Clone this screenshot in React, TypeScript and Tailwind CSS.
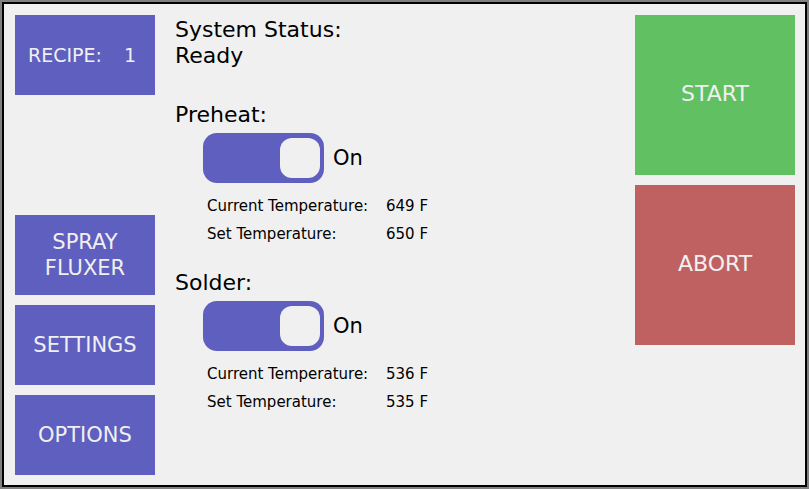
import React from "react";

const font = { fontFamily: '"DejaVu Sans", Verdana, sans-serif' };

const NavButton = ({ children, className = "" }: { children: React.ReactNode; className?: string }) => (
  <button
    className={`w-[140px] h-[80px] bg-[#5f5fbf] text-[#f0f0f0] text-[21px] leading-[26px] flex flex-col items-center justify-center ${className}`}
  >
    {children}
  </button>
);

const Toggle = ({ on }: { on: boolean }) => (
  <div className="flex items-center gap-[9px] ml-[28px]">
    <div className="w-[121px] h-[50px] rounded-[14px] bg-[#5f5fbf] flex items-center justify-end pr-[4px]">
      <div className="w-[40px] h-[40px] rounded-[12px] bg-[#f0f0f0]" />
    </div>
    <span className="text-[21px] leading-[26px] text-black">{on ? "On" : "Off"}</span>
  </div>
);

const TempRows = ({ current, set }: { current: number; set: number }) => (
  <div className="ml-[32px] mt-[9px] text-[15px] leading-[28px] text-black">
    <div className="flex">
      <span className="w-[179px]">Current Temperature:</span>
      <span>{current} F</span>
    </div>
    <div className="flex">
      <span className="w-[179px]">Set Temperature:</span>
      <span>{set} F</span>
    </div>
  </div>
);

const Zone = ({ name, current, set }: { name: string; current: number; set: number }) => (
  <div className="flex flex-col">
    <div className="text-[22px] leading-[26px] text-black">{name}:</div>
    <div className="mt-[5px]">
      <Toggle on />
    </div>
    <TempRows current={current} set={set} />
  </div>
);

export default function App() {
  return (
    <div style={font} className="w-[809px] h-[489px] border-2 border-[#808080]">
      <div className="w-full h-full border-2 border-black bg-[#f0f0f0] flex">
        {/* left menu */}
        <div className="flex flex-col justify-between pl-[11px] pt-[11px] pb-[10px]">
          <NavButton>
            <div className="flex items-center text-[19px] pr-[6px]">
              <span>RECIPE:</span>
              <span className="ml-[22px]">1</span>
            </div>
          </NavButton>
          <div className="flex flex-col gap-[10px]">
            <NavButton>
              <span>SPRAY</span>
              <span>FLUXER</span>
            </NavButton>
            <NavButton>SETTINGS</NavButton>
            <NavButton>OPTIONS</NavButton>
          </div>
        </div>

        {/* status */}
        <div className="flex-1 flex flex-col pl-[20px] pt-[13px]">
          <div className="text-[22px] leading-[26px] text-black">
            <div>System Status:</div>
            <div>Ready</div>
          </div>
          <div className="mt-[33px]">
            <Zone name="Preheat" current={649} set={650} />
          </div>
          <div className="mt-[22px]">
            <Zone name="Solder" current={536} set={535} />
          </div>
        </div>

        {/* actions */}
        <div className="flex flex-col gap-[10px] pt-[11px] pr-[10px]">
          <button className="w-[160px] h-[160px] bg-[#61c061] text-[#f0f0f0] text-[22px] flex items-center justify-center pb-[4px]">
            START
          </button>
          <button className="w-[160px] h-[160px] bg-[#c06161] text-[#f0f0f0] text-[22px] flex items-center justify-center pb-[4px]">
            ABORT
          </button>
        </div>
      </div>
    </div>
  );
}
